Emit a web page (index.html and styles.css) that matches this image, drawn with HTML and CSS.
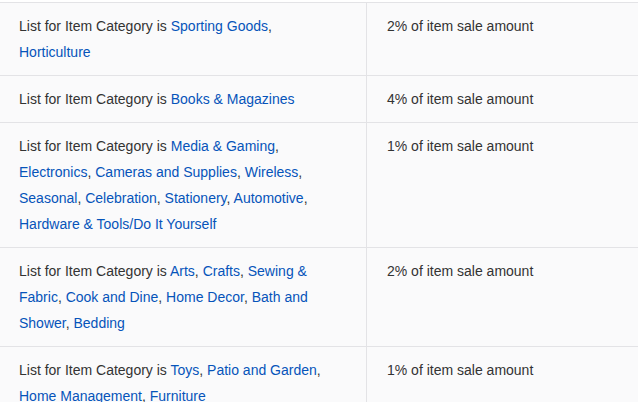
FILE: index.html
```html
<!DOCTYPE html>
<html lang="en">
<head>
    <meta charset="UTF-8">
    <meta name="viewport" content="width=device-width, initial-scale=1.0">
    <title>Final value fees</title>
    <link rel="stylesheet" href="styles.css">
</head>
<body>
    <table class="fee-table">
        <tr>
            <td class="cond">List for Item Category is <a href="#">Sporting Goods</a>, <a href="#">Horticulture</a></td>
            <td class="fee">2% of item sale amount</td>
        </tr>
        <tr>
            <td class="cond">List for Item Category is <a href="#">Books &amp; Magazines</a></td>
            <td class="fee">4% of item sale amount</td>
        </tr>
        <tr>
            <td class="cond">List for Item Category is <a href="#">Media &amp; Gaming</a>, <a href="#">Electronics</a>, <a href="#">Cameras and Supplies</a>, <a href="#">Wireless</a>, <a href="#">Seasonal</a>, <a href="#">Celebration</a>, <a href="#">Stationery</a>, <a href="#">Automotive</a>, <a href="#">Hardware &amp; Tools/Do It Yourself</a></td>
            <td class="fee">1% of item sale amount</td>
        </tr>
        <tr>
            <td class="cond">List for Item Category is <a href="#">Arts</a>, <a href="#">Crafts</a>, <a href="#">Sewing &amp; Fabric</a>, <a href="#">Cook and Dine</a>, <a href="#">Home Decor</a>, <a href="#">Bath and Shower</a>, <a href="#">Bedding</a></td>
            <td class="fee">2% of item sale amount</td>
        </tr>
        <tr>
            <td class="cond">List for Item Category is <a href="#">Toys</a>, <a href="#">Patio and Garden</a>, <a href="#">Home Management</a>, <a href="#">Furniture</a></td>
            <td class="fee">1% of item sale amount</td>
        </tr>
    </table>
</body>
</html>
```

FILE: styles.css
```css
body {
    margin: 0;
    padding-top: 2px;
    background: #fff;
    font-family: 'Liberation Sans', Arial, sans-serif;
    font-size: 14px;
    color: #333;
}

.fee-table {
    width: 660px;
    border-collapse: collapse;
    background: #fafafb;
    line-height: 26px;
}

.fee-table td {
    vertical-align: top;
    padding: 10px 20px;
    border-top: 1px solid #e3e3e6;
    border-bottom: 1px solid #e3e3e6;
}

.fee-table td.cond {
    width: 327px;
    padding-left: 19px;
    border-right: 1px solid #e3e3e6;
}

a {
    color: #0654ba;
    text-decoration: none;
}
```
